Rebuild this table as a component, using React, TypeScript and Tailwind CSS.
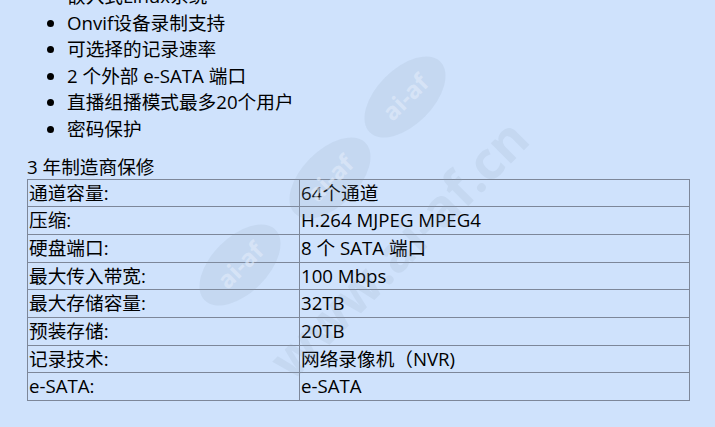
const features = [
  '嵌入式Linux系统',
  'Onvif设备录制支持',
  '可选择的记录速率',
  '2 个外部 e-SATA 端口',
  '直播组播模式最多20个用户',
  '密码保护',
];

const specs = [
  { label: '通道容量:', value: '64个通道' },
  { label: '压缩:', value: 'H.264 MJPEG MPEG4' },
  { label: '硬盘端口:', value: '8 个 SATA 端口' },
  { label: '最大传入带宽:', value: '100 Mbps' },
  { label: '最大存储容量:', value: '32TB' },
  { label: '预装存储:', value: '20TB' },
  { label: '记录技术:', value: '网络录像机（NVR)' },
  { label: 'e-SATA:', value: 'e-SATA' },
];

// faint site watermark: three ovals and the diagonal domain name
const ovals = [
  { left: 'left-[190px]', top: 'top-[237px]' },
  { left: 'left-[280px]', top: 'top-[150px]' },
  { left: 'left-[355px]', top: 'top-[69px]' },
];

function Watermark() {
  return (
    <div className="pointer-events-none absolute inset-0">
      {ovals.map((o, i) => (
        <div
          key={i}
          className={`absolute ${o.left} ${o.top} flex h-[56px] w-[100px] -rotate-45 items-center justify-center rounded-[50%] bg-[#8f9fb8]/15`}
        >
          <span className="text-[24px] font-bold text-[#e2ecfb]/60">ai-af</span>
        </div>
      ))}
      <div className="absolute left-[178px] top-[222px] w-[440px] -rotate-45 text-center text-[52px] font-bold leading-none text-[#8f9fb8]/15">
        www.ai-af.cn
      </div>
    </div>
  );
}

export default function App() {
  return (
    <div className="relative min-h-screen w-full overflow-hidden bg-[#cfe2fc] font-['Open_Sans','Noto_Sans_CJK_SC',sans-serif] text-[18.67px] text-black">
      <div className="px-[27px]">
        <ul className="-mt-[17px] list-disc pl-10 leading-[26.6px]">
          {features.map((f) => (
            <li key={f}>{f}</li>
          ))}
        </ul>
        <p className="mt-[11px] leading-[25px]">3 年制造商保修</p>
        <table className="w-[663px] border-collapse">
          <tbody>
            {specs.map((s) => (
              <tr key={s.label}>
                <td className="w-[272px] border border-[#7d8799] px-[1px] py-0 leading-[26.7px]">{s.label}</td>
                <td className="border border-[#7d8799] px-[1px] py-0 leading-[26.7px]">{s.value}</td>
              </tr>
            ))}
          </tbody>
        </table>
      </div>
      <Watermark />
    </div>
  );
}
